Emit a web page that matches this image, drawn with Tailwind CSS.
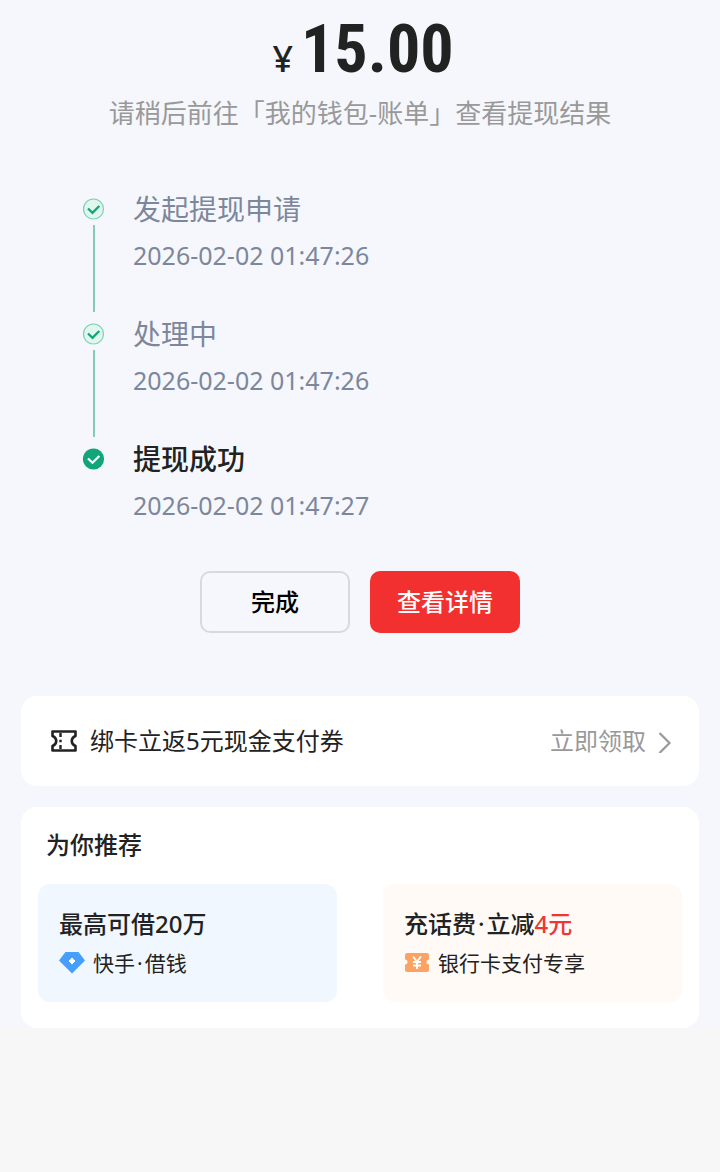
<!DOCTYPE html>
<html lang="zh-CN">
<head>
    <meta charset="UTF-8">
    <meta name="viewport" content="width=device-width, initial-scale=1.0">
    <title>提现结果</title>
    <script src="https://cdn.jsdelivr.net/npm/@tailwindcss/browser@4"></script>
</head>
<body class="min-h-screen bg-[#f7f7f7] font-['Noto_Sans','Noto_Sans_CJK_SC',sans-serif] text-[#222222]">
    <div class="bg-[#f5f7fc] px-[21px] pt-[13px]">
        <!-- Amount -->
        <header class="text-center">
            <h1 class="flex items-baseline justify-center gap-2 pl-1.5">
                <span class="text-[36px] leading-10 font-medium">¥</span>
                <span class="font-['Roboto_Condensed','Roboto',sans-serif] text-[66px] leading-[74px] font-bold">15.00</span>
            </h1>
            <p class="mt-1.5 text-[26px] leading-10 text-[#999999]">请稍后前往「我的钱包-账单」查看提现结果</p>
        </header>

        <!-- Progress -->
        <ol class="mt-14 pl-[61px]">
            <li class="flex gap-[27px]">
                <div class="flex w-6 flex-col items-center pt-2">
                    <svg class="size-6 shrink-0" viewBox="0 0 24 24" fill="none">
                        <circle cx="11.5" cy="12" r="10" fill="#e0f7ee" stroke="#7fd0b5" stroke-width="1.2"/>
                        <path d="M6 11.500l4.500 4.300 6.800-6.800" stroke="#12a57c" stroke-width="2.3"/>
                    </svg>
                    <div class="mt-1 mb-0.5 w-0.5 flex-1 bg-[#82cbb4]"></div>
                </div>
                <div class="pb-10 text-[#7d879c]">
                    <h2 class="text-[28px] leading-10">发起提现申请</h2>
                    <time class="mt-[7px] block text-[25px] leading-[38px]">2026-02-02 01:47:26</time>
                </div>
            </li>
            <li class="flex gap-[27px]">
                <div class="flex w-6 flex-col items-center pt-2">
                    <svg class="size-6 shrink-0" viewBox="0 0 24 24" fill="none">
                        <circle cx="11.5" cy="12" r="10" fill="#e0f7ee" stroke="#7fd0b5" stroke-width="1.2"/>
                        <path d="M6 11.500l4.500 4.300 6.800-6.800" stroke="#12a57c" stroke-width="2.3"/>
                    </svg>
                    <div class="mt-1 mb-0.5 w-0.5 flex-1 bg-[#82cbb4]"></div>
                </div>
                <div class="pb-10 text-[#7d879c]">
                    <h2 class="text-[28px] leading-10">处理中</h2>
                    <time class="mt-[7px] block text-[25px] leading-[38px]">2026-02-02 01:47:26</time>
                </div>
            </li>
            <li class="flex gap-[27px]">
                <div class="flex w-6 flex-col items-center pt-2">
                    <svg class="size-6 shrink-0" viewBox="0 0 24 24" fill="none">
                        <circle cx="11.5" cy="12" r="10.6" fill="#12a57c"/>
                        <path d="M6 11.500l4.500 4.300 6.800-6.800" stroke="#ffffff" stroke-width="2.2"/>
                    </svg>
                </div>
                <div class="text-[#7d879c]">
                    <h2 class="text-[28px] leading-10 font-medium text-[#222222]">提现成功</h2>
                    <time class="mt-[7px] block text-[25px] leading-[38px]">2026-02-02 01:47:27</time>
                </div>
            </li>
        </ol>

        <!-- Buttons -->
        <div class="mt-[47px] flex justify-center gap-5 text-2xl font-medium">
            <button type="button" class="h-[62px] w-[150px] rounded-[10px] border-2 border-[#d5dae2] text-black">完成</button>
            <button type="button" class="h-[62px] w-[150px] rounded-[10px] bg-[#f33030] text-white">查看详情</button>
        </div>

        <!-- Coupon -->
        <a href="#" class="mt-[63px] flex h-[90px] items-center rounded-2xl bg-white pr-[27px] pl-[29px] text-2xl">
            <svg class="h-6 w-7 shrink-0" viewBox="0 0 28 24" fill="none" stroke="#222222" stroke-width="2.6" stroke-linejoin="round">
                <path d="M2.500 2.500h23v4.500c-5 2-5 8 0 10v4.500h-23v-4.500c5-2 5-8 0-10z"/>
                <path d="M10.500 4v4M10.500 10.700v2.600M10.500 16v4" stroke-width="2.400"/>
            </svg>
            <span class="ml-3 flex-1">绑卡立返5元现金支付券</span>
            <span class="text-[#999999]">立即领取</span>
            <svg class="ml-3 h-6 w-3.5 shrink-0" viewBox="0 0 14 24" fill="none" stroke="#999999" stroke-width="2.2">
                <path d="M1.500 4l10 10-10 10"/>
            </svg>
        </a>

        <!-- Recommendations -->
        <section class="mt-[21px] rounded-2xl bg-white px-[17px] pt-[19px] pb-[26px]">
            <h2 class="pl-2 text-2xl leading-[38px] font-medium">为你推荐</h2>
            <div class="mt-5 grid grid-cols-2 gap-[46px]">
                <a href="#" class="h-[118px] rounded-xl bg-[#f0f7fe] px-[21px] pt-5">
                    <h3 class="text-2xl leading-10 font-medium">最高可借20万</h3>
                    <p class="flex items-center gap-2 text-[21px] leading-[38px]">
                        <svg class="h-6 w-[26px] shrink-0" viewBox="0 0 26 24">
                            <path d="M6.500 1h13L26 9.500 13 22.500 0 9.500z" fill="#469ffd"/>
                            <path d="M13 7l1.500 1.500L16 10l-1.500 1.500L13 13l-1.500-1.500L10 10l1.500-1.500z" fill="#ffffff" stroke="#ffffff" stroke-linejoin="round"/>
                        </svg>
                        <span>快手<span class="px-0.5">·</span>借钱</span>
                    </p>
                </a>
                <a href="#" class="h-[118px] rounded-xl bg-[#fffaf6] px-[21px] pt-5">
                    <h3 class="text-2xl leading-10 font-medium">充话费<span class="px-0.5">·</span>立减<span class="text-[#f03535]">4元</span></h3>
                    <p class="flex items-center gap-2 text-[21px] leading-[38px]">
                        <svg class="h-6 w-[26px] shrink-0" viewBox="0 0 26 24">
                            <path d="M3 2h20a2 2 0 0 1 2 2v4.500a2.500 2.500 0 0 0 0 5V19a2 2 0 0 1-2 2H3a2 2 0 0 1-2-2v-5.500a2.500 2.500 0 0 0 0-5V4a2 2 0 0 1 2-2z" fill="#fca364"/>
                            <path d="M9 5.500l4 5 4-5M13 10.500V18M9 11h8M9 14.500h8" fill="none" stroke="#ffffff" stroke-width="1.800"/>
                        </svg>
                        银行卡支付专享
                    </p>
                </a>
            </div>
        </section>
    </div>
</body>
</html>
